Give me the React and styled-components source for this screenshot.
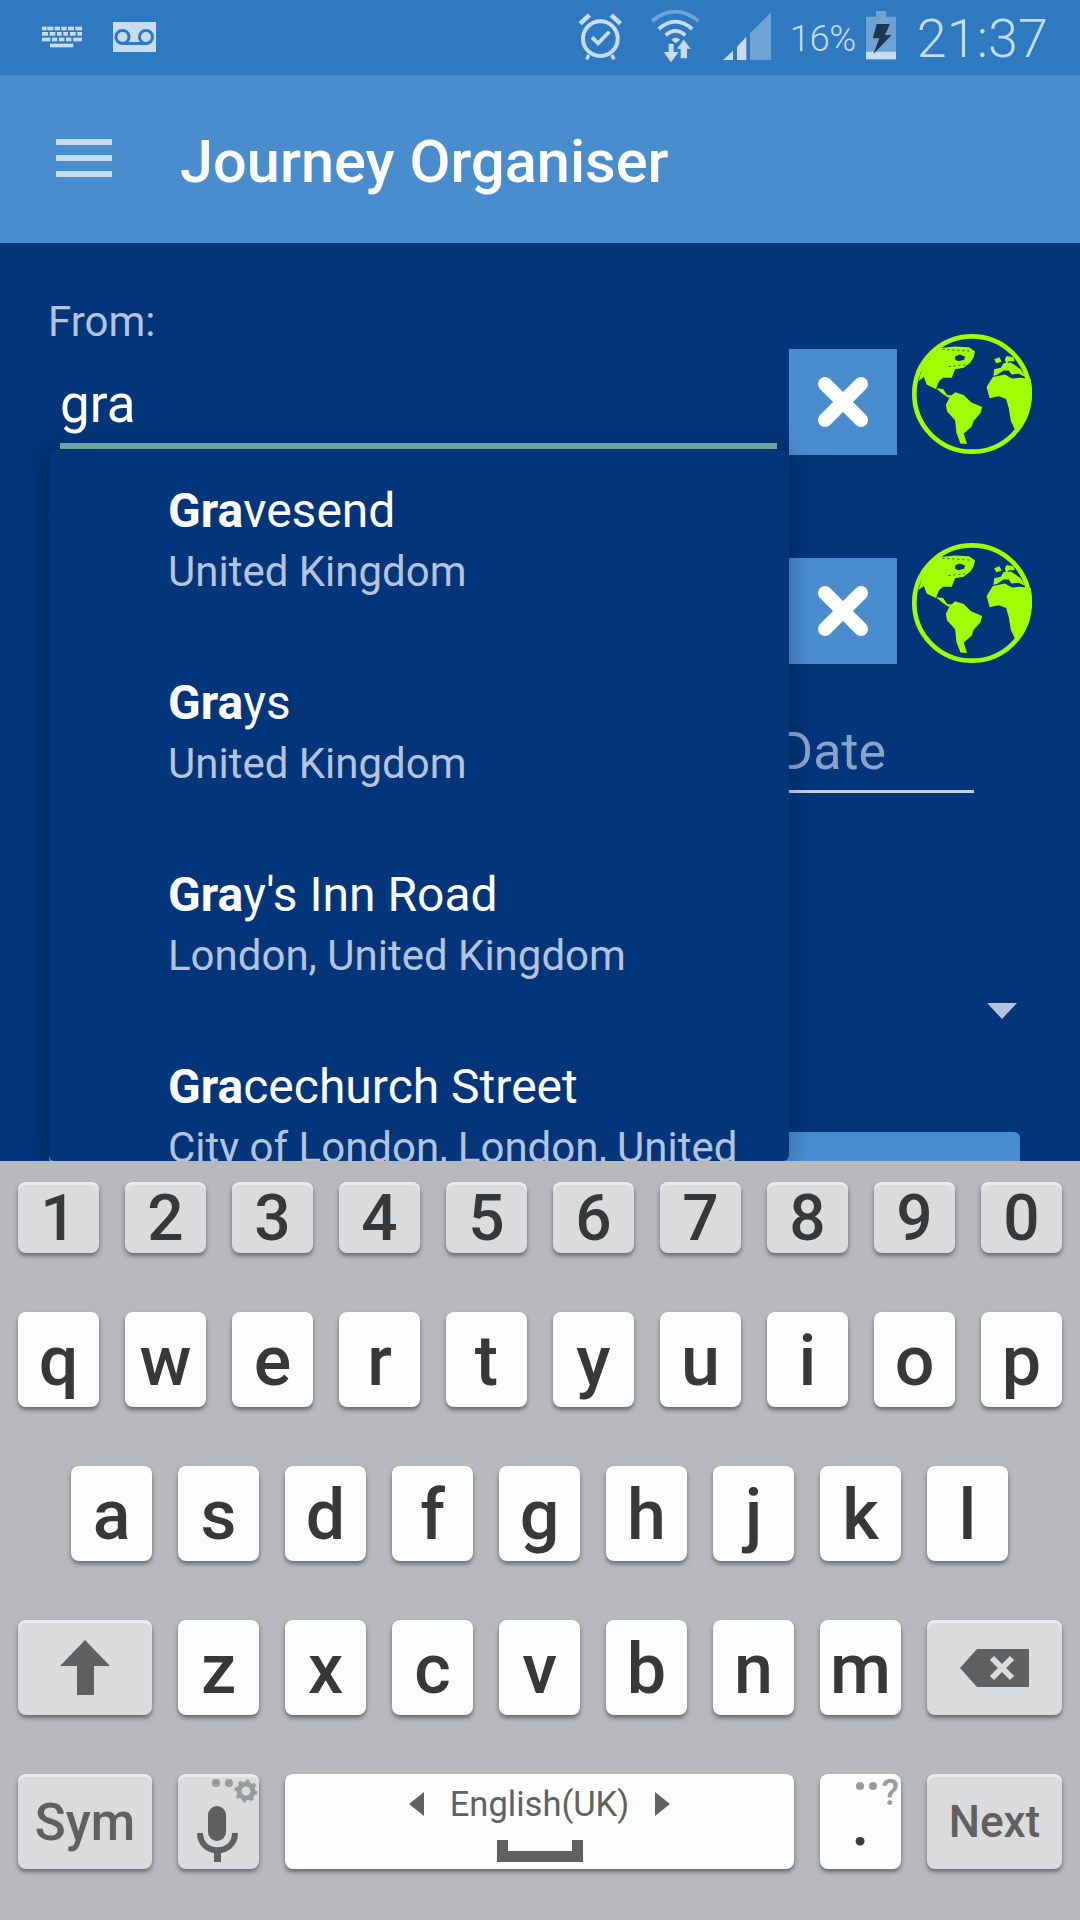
import styled, { createGlobalStyle } from "styled-components";

const GlobalStyle = createGlobalStyle`
  html, body {
    margin: 0;
    padding: 0;
    background: #03357a;
  }
  body {
    font-family: Roboto, "Liberation Sans", sans-serif;
  }
`;

const Screen = styled.div`
  width: 1080px;
  height: 1920px;
  display: flex;
  flex-direction: column;
  overflow: hidden;
`;

const StatusBar = styled.div`
  height: 75px;
  flex: none;
  background: #2f79c1;
  display: flex;
  align-items: flex-start;
  justify-content: space-between;
  padding: 0 32px 0 42px;
  box-sizing: border-box;
  color: #c8dcef;
`;

const StatusLeft = styled.div`
  display: flex;
  gap: 29px;
  margin-top: 22px;
  align-items: flex-start;
`;

const StatusRight = styled.div`
  display: flex;
  align-items: flex-start;
`;

const StatusIcon = styled.svg`
  display: block;
  flex: none;
  margin-left: ${(p) => p.$ml || 0}px;
  margin-top: ${(p) => p.$mt || 0}px;
`;

const Percent = styled.span`
  font-size: 36.5px;
  font-weight: 300;
  line-height: 44px;
  margin: 17px 0 0 19px;
  letter-spacing: -0.5px;
`;

const Clock = styled.span`
  font-size: 54px;
  font-weight: 300;
  line-height: 60px;
  margin: 9px 0 0 21px;
`;

const AppBar = styled.div`
  height: 168px;
  flex: none;
  background: #4a8dcf;
  display: flex;
  align-items: center;
  padding-left: 56px;
  box-sizing: border-box;
`;

const Hamburger = styled.div`
  width: 56px;
  display: flex;
  flex-direction: column;
  gap: 10px;
  margin-right: 68px;
  margin-top: -2px;
`;

const HamburgerBar = styled.span`
  display: block;
  height: 6px;
  background: #cbdcef;
`;

const Title = styled.h1`
  margin: 0;
  color: #fff;
  font-size: 59.5px;
  font-weight: 500;
  line-height: 70px;
  margin-top: 5px;
`;

const Body = styled.div`
  position: relative;
  flex: 1;
  min-height: 0;
  overflow: hidden;
  background: #03357a;
  display: flex;
  flex-direction: column;
  padding: 50px 48px 0 49px;
  box-sizing: border-box;
`;

const FieldRow = styled.div`
  height: 162px;
  flex: none;
  display: flex;
  align-items: flex-end;
  margin-top: ${(p) => p.$mt || 0}px;
`;

const Field = styled.div`
  width: 740px;
  height: 100%;
  flex: none;
  box-sizing: border-box;
  padding: 0 12px 6px 11px;
  display: flex;
  flex-direction: column;
`;

const FieldLabel = styled.label`
  display: block;
  margin: 2px 0 0 -12px;
  font-size: 42px;
  line-height: 54px;
  color: #b5c3dc;
`;

const FieldInput = styled.div`
  flex: 1;
  display: flex;
  align-items: flex-end;
  font-size: 53px;
  line-height: 66px;
  color: #fff;
  border-bottom: 6px solid #74b8b0;
  padding-bottom: 6px;
`;

const ClearButton = styled.div`
  width: 108px;
  height: 106px;
  flex: none;
  background: #4a8dcf;
  display: flex;
  align-items: center;
  justify-content: center;
`;

const GlobeButton = styled.div`
  width: 120px;
  height: 120px;
  flex: none;
  margin: 0 0 1px 15px;
`;

const DateRow = styled.div`
  flex: none;
  display: flex;
  justify-content: flex-end;
  margin: 59px 58px 0 0;
`;

const DateField = styled.div`
  width: 195px;
  height: 67px;
  font-size: 52px;
  line-height: 58px;
  color: #8aa3c9;
  border-bottom: 3px solid #c5cfe0;
`;

const SelectRow = styled.div`
  flex: none;
  display: flex;
  justify-content: flex-end;
  margin: 210px 15px 0 0;
`;

const SelectArrow = styled.div`
  width: 0;
  height: 0;
  border-left: 15px solid transparent;
  border-right: 15px solid transparent;
  border-top: 16px solid #b3c2dd;
`;

const SubmitButton = styled.div`
  flex: none;
  height: 80px;
  margin: 113px 12px 0 0;
  background: #4a8dcf;
  border-radius: 6px;
`;

const Suggestions = styled.div`
  position: absolute;
  top: 207px;
  left: 49px;
  width: 740px;
  height: 711px;
  overflow: hidden;
  background: #03357a;
  border-radius: 6px;
  box-shadow: 0 2px 26px rgba(0, 0, 0, 0.3);
  z-index: 2;
`;

const SuggestionRow = styled.div`
  height: 192px;
  box-sizing: border-box;
  padding: 32px 20px 0 119px;
`;

const SuggestionName = styled.div`
  font-size: 48px;
  line-height: 58px;
  color: #fff;

  & b {
    font-weight: 700;
  }
`;

const SuggestionPlace = styled.div`
  margin-top: 3px;
  font-size: 42px;
  line-height: 58px;
  color: #b5c3dc;
  white-space: nowrap;
`;

const Keyboard = styled.div`
  height: 759px;
  flex: none;
  background: #b8b9bd;
  box-sizing: border-box;
  padding-top: 21px;
  display: flex;
  flex-direction: column;
  gap: 59px;
  position: relative;
  z-index: 3;
`;

const KeyRow = styled.div`
  display: flex;
  gap: 26px;
  padding-left: ${(p) => p.$indent || 18}px;
`;

const Key = styled.div`
  position: relative;
  width: ${(p) => p.$w || 81}px;
  height: ${(p) => p.$h || 95}px;
  flex: none;
  box-sizing: border-box;
  border-radius: 8px;
  background: ${(p) => (p.$grey ? "#dadbdd" : "#fcfcfc")};
  box-shadow: 0 3px 4px rgba(40, 40, 45, 0.55)
    ${(p) => (p.$grey ? ", inset 0 3px 1px #e9eaeb" : "")};
  display: flex;
  align-items: center;
  justify-content: center;
  color: #383838;
  font-size: 70px;
  font-weight: 500;
  line-height: 1;
`;

const Digit = styled.span`
  font-size: 64px;
  font-weight: 500;
  margin-top: 3px;
`;

const Letter = styled.span`
  margin-top: 2px;
`;

const ActionLabel = styled.span`
  color: #606060;
  font-size: ${(p) => p.$size || 51}px;
  font-weight: 500;
  margin-top: 1px;
`;

const SpaceContent = styled.div`
  display: flex;
  flex-direction: column;
  align-items: center;
  margin-top: 2px;
`;

const LangRow = styled.div`
  display: flex;
  align-items: center;
  gap: 26px;
  color: #616161;
  font-size: 34.5px;
  font-weight: 400;
  line-height: 40px;
`;

const LangArrow = styled.span`
  width: 0;
  height: 0;
  border-top: 12px solid transparent;
  border-bottom: 12px solid transparent;
  ${(p) => (p.$right ? "border-left" : "border-right")}: 15px solid #616161;
`;

const SpaceBar = styled.svg`
  display: block;
  margin-top: 16px;
`;

const KeyHint = styled.span`
  position: absolute;
  top: 1px;
  right: 2px;
  display: flex;
  align-items: flex-start;
  gap: 4px;
  color: #9a9a9a;
  font-size: 36px;
  font-weight: 500;
  line-height: 36px;
`;

const HintDots = styled.i`
  display: flex;
  gap: 5px;
  margin-top: 7px;

  &::before,
  &::after {
    content: "";
    width: 8px;
    height: 8px;
    border-radius: 50%;
    background: #9a9a9a;
  }
`;

const PeriodMark = styled.span`
  font-size: 64px;
  margin-top: 4px;
  color: #383838;
`;

const KeyDrawing = styled.svg`
  position: absolute;
  inset: 0;
`;

const STATUS = "#c8dcef";
const DIM = "#6fa3d6";

const KB_ROWS = [
  { y: 81, cells: [[36, 14], [52, 18], [74, 16], [94, 16], [114, 18], [136, 20]] },
  { y: 97, cells: [[36, 18], [59, 17], [81, 14], [100, 14], [120, 17], [142, 14]] },
  { y: 114, cells: [[36, 25], [66, 16], [87, 16], [108, 16], [130, 26]] },
  { y: 132, cells: [[60, 70]] },
];

function KeyboardIcon() {
  return (
    <StatusIcon width="42" height="28" viewBox="36 70 126 84" $mt="1">
      {KB_ROWS.map((row) =>
        row.cells.map(([x, w]) => (
          <rect key={row.y + "-" + x} x={x} y={row.y} width={w} height="11" fill={STATUS} />
        ))
      )}
    </StatusIcon>
  );
}

function VoicemailIcon() {
  return (
    <StatusIcon width="43" height="30" viewBox="0 0 43 30">
      <rect width="43" height="30" fill={STATUS} />
      <g fill="none" stroke="#2f79c1" strokeWidth="3">
        <circle cx="9.5" cy="15" r="6.5" />
        <circle cx="33" cy="15" r="6.5" />
        <path d="M9.5 21.5H33" />
      </g>
    </StatusIcon>
  );
}

function AlarmIcon() {
  return (
    <StatusIcon width="48" height="50" viewBox="55 30 144 150" $mt="10">
      <g fill="none" stroke={STATUS}>
        <circle cx="125" cy="116" r="52" strokeWidth="12" />
        <path d="M100 112L118 130L152 95" strokeWidth="11" />
        <path d="M90 165L84 178M160 165L166 178" strokeWidth="10" />
      </g>
      <path d="M60 66L88 40L97 50L69 76Z M190 66L162 40L153 50L181 76Z" fill={STATUS} />
    </StatusIcon>
  );
}

function WifiIcon() {
  return (
    <StatusIcon width="55" height="56" viewBox="265 20 165 168" $mt="7" $ml="22">
      <g fill="none" strokeWidth="11">
        <path d="M280 62Q350 6 420 62" stroke={DIM} />
        <path d="M300 86Q350 42 401 86" stroke={STATUS} />
        <path d="M321 105Q350 78 380 105" stroke={STATUS} />
      </g>
      <path d="M338 118Q351 106 365 118L351 129Z" fill={STATUS} />
      <path d="M330 130H345V155H360L337 186L315 155H330Z" fill={STATUS} />
      <path d="M366 174V145H355L375 118L396 145H385V174Z" fill={STATUS} />
    </StatusIcon>
  );
}

function SignalIcon() {
  return (
    <StatusIcon width="49" height="49" viewBox="492 33 147 147" $mt="11" $ml="20">
      <path d="M576 180H639V37L576 100Z" fill={DIM} />
      <path d="M495 180H525V152ZM537 180H565V110L537 140Z" fill={STATUS} />
    </StatusIcon>
  );
}

function BatteryIcon() {
  return (
    <StatusIcon width="30" height="49" viewBox="918 33 90 147" $mt="11" $ml="10">
      <path d="M948 33H978V50H1008V155H918V50H948Z" fill={DIM} />
      <rect x="918" y="155" width="90" height="23" fill={STATUS} />
      <path d="M950 72H990L975 105H995L940 162L958 115H938Z" fill="#1f3650" />
    </StatusIcon>
  );
}

function ClearIcon() {
  return (
    <svg width="52" height="52" viewBox="0 0 52 52">
      <path
        d="M8 8L44 44M44 8L8 44"
        stroke="#fff"
        strokeWidth="14"
        strokeLinecap="round"
        fill="none"
      />
    </svg>
  );
}

function Globe() {
  return (
    <svg width="120" height="120" viewBox="20 20 362 362">
      <circle cx="201" cy="201" r="174" fill="none" stroke="#a0ff00" strokeWidth="14" />
      <g fill="#a0ff00">
        <path d="M40 160L52 118L80 84L108 60L118 72L106 62L150 58L192 60L210 72L206 90L196 106L176 122L150 126L140 152L114 152L102 162L92 186L76 178L64 172L56 150L40 162Z" />
        <path d="M92 184L114 186L126 204L146 206L130 212L112 200Z" />
        <path d="M122 234L134 210L150 196L176 204L198 226L232 240L226 260L206 282L200 300L176 320L186 352L166 350L154 318L150 280L126 254Z" />
        <path d="M245 180L264 150L300 142L322 154L346 152L378 156L384 201L372 252L332 312L318 282L312 244L304 216L282 208L254 214Z" />
        <path d="M266 146L268 126L288 122L296 108L318 106L348 126L362 150L342 140L320 142L312 130L296 130L276 144Z" />
        <path d="M268 96L284 90L290 104L274 108Z" />
        <path d="M300 96L306 86L326 90L330 102L312 102L304 112Z" />
      </g>
      <path d="M150 88L164 82L180 88L178 98L160 102L150 98Z" fill="#03357a" />
      <path d="M112 66L200 72M130 118L190 112" stroke="#03357a" strokeWidth="2.5" strokeDasharray="6 9" />
    </svg>
  );
}

function ShiftIcon() {
  return (
    <svg width="50" height="55" viewBox="0 0 50 55">
      <path d="M25 0L50 26H34V55H17V26H0Z" fill="#606060" strokeLinejoin="round" />
    </svg>
  );
}

function BackspaceIcon() {
  return (
    <svg width="69" height="38" viewBox="0 0 69 38">
      <path d="M17 0H69V38H17L0 19Z" fill="#606060" />
      <path d="M32 9L52 29M52 9L32 29" stroke="#dadbdd" strokeWidth="6" />
    </svg>
  );
}

function MicDrawing() {
  return (
    <KeyDrawing width="81" height="95" viewBox="0 0 81 95">
      <circle cx="38" cy="9" r="4" fill="#9a9a9a" />
      <circle cx="51" cy="9" r="4" fill="#9a9a9a" />
      <circle cx="68" cy="17" r="7" fill="none" stroke="#9a9a9a" strokeWidth="5" />
      <circle cx="68" cy="17" r="10" fill="none" stroke="#9a9a9a" strokeWidth="3" strokeDasharray="3.5 4.3" />
      <rect x="30" y="32" width="18" height="35" rx="9" fill="#606060" />
      <path d="M22 59C22 82 57 82 57 59" fill="none" stroke="#606060" strokeWidth="6" />
      <rect x="36" y="74" width="7" height="14" fill="#606060" />
    </KeyDrawing>
  );
}

const NUMBERS = "1234567890".split("");
const TOP_ROW = "qwertyuiop".split("");
const MID_ROW = "asdfghjkl".split("");
const LOW_ROW = "zxcvbnm".split("");

const SUGGESTIONS = [
  { match: "Gra", rest: "vesend", place: "United Kingdom" },
  { match: "Gra", rest: "ys", place: "United Kingdom" },
  { match: "Gra", rest: "y's Inn Road", place: "London, United Kingdom" },
  { match: "Gra", rest: "cechurch Street", place: "City of London, London, United" },
];

export default function App() {
  return (
    <Screen>
      <GlobalStyle />
      <StatusBar>
        <StatusLeft>
          <KeyboardIcon />
          <VoicemailIcon />
        </StatusLeft>
        <StatusRight>
          <AlarmIcon />
          <WifiIcon />
          <SignalIcon />
          <Percent>16%</Percent>
          <BatteryIcon />
          <Clock>21:37</Clock>
        </StatusRight>
      </StatusBar>
      <AppBar>
        <Hamburger>
          <HamburgerBar />
          <HamburgerBar />
          <HamburgerBar />
        </Hamburger>
        <Title>Journey Organiser</Title>
      </AppBar>
      <Body>
        <FieldRow>
          <Field>
            <FieldLabel>From:</FieldLabel>
            <FieldInput>gra</FieldInput>
          </Field>
          <ClearButton>
            <ClearIcon />
          </ClearButton>
          <GlobeButton>
            <Globe />
          </GlobeButton>
        </FieldRow>
        <FieldRow $mt={47}>
          <Field>
            <FieldLabel>To:</FieldLabel>
            <FieldInput />
          </Field>
          <ClearButton>
            <ClearIcon />
          </ClearButton>
          <GlobeButton>
            <Globe />
          </GlobeButton>
        </FieldRow>
        <DateRow>
          <DateField>Date</DateField>
        </DateRow>
        <SelectRow>
          <SelectArrow />
        </SelectRow>
        <SubmitButton />
        <Suggestions>
          {SUGGESTIONS.map((s) => (
            <SuggestionRow key={s.rest}>
              <SuggestionName>
                <b>{s.match}</b>
                {s.rest}
              </SuggestionName>
              <SuggestionPlace>{s.place}</SuggestionPlace>
            </SuggestionRow>
          ))}
        </Suggestions>
      </Body>
      <Keyboard>
        <KeyRow>
          {NUMBERS.map((n) => (
            <Key key={n} $grey $h={71}>
              <Digit>{n}</Digit>
            </Key>
          ))}
        </KeyRow>
        <KeyRow>
          {TOP_ROW.map((c) => (
            <Key key={c}>
              <Letter>{c}</Letter>
            </Key>
          ))}
        </KeyRow>
        <KeyRow $indent={71}>
          {MID_ROW.map((c) => (
            <Key key={c}>
              <Letter>{c}</Letter>
            </Key>
          ))}
        </KeyRow>
        <KeyRow>
          <Key $grey $w={134}>
            <ShiftIcon />
          </Key>
          {LOW_ROW.map((c) => (
            <Key key={c}>
              <Letter>{c}</Letter>
            </Key>
          ))}
          <Key $grey $w={135}>
            <BackspaceIcon />
          </Key>
        </KeyRow>
        <KeyRow>
          <Key $grey $w={134}>
            <ActionLabel>Sym</ActionLabel>
          </Key>
          <Key $grey>
            <MicDrawing />
          </Key>
          <Key $w={509}>
            <SpaceContent>
              <LangRow>
                <LangArrow />
                English(UK)
                <LangArrow $right />
              </LangRow>
              <SpaceBar width="86" height="22" viewBox="0 0 86 22">
                <path d="M0 0H11V11H75V0H86V22H0Z" fill="#606060" />
              </SpaceBar>
            </SpaceContent>
          </Key>
          <Key>
            <KeyHint>
              <HintDots />?
            </KeyHint>
            <PeriodMark>.</PeriodMark>
          </Key>
          <Key $grey $w={135}>
            <ActionLabel $size={44}>Next</ActionLabel>
          </Key>
        </KeyRow>
      </Keyboard>
    </Screen>
  );
}
